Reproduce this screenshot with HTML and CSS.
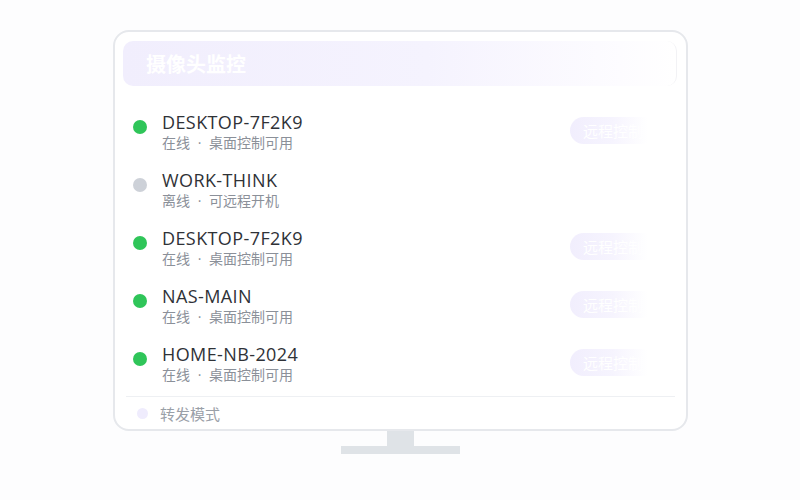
FILE: index.html
```html
<!DOCTYPE html>
<html lang="zh-CN">
<head>
  <meta charset="UTF-8">
  <meta name="viewport" content="width=device-width, initial-scale=1.0">
  <title>摄像头监控</title>
  <link rel="stylesheet" href="styles.css">
</head>
<body>
  <div class="stage">
    <div class="monitor">
      <header class="panel-head">摄像头监控</header>

      <ul class="device-list">
        <li class="device">
          <span class="dot online"></span>
          <div class="device-info">
            <div class="device-name">DESKTOP-7F2K9</div>
            <div class="device-desc">在线 · 桌面控制可用</div>
          </div>
          <button class="remote-btn">远程控制</button>
        </li>
        <li class="device">
          <span class="dot offline"></span>
          <div class="device-info">
            <div class="device-name">WORK-THINK</div>
            <div class="device-desc">离线 · 可远程开机</div>
          </div>
        </li>
        <li class="device">
          <span class="dot online"></span>
          <div class="device-info">
            <div class="device-name">DESKTOP-7F2K9</div>
            <div class="device-desc">在线 · 桌面控制可用</div>
          </div>
          <button class="remote-btn">远程控制</button>
        </li>
        <li class="device">
          <span class="dot online"></span>
          <div class="device-info">
            <div class="device-name">NAS-MAIN</div>
            <div class="device-desc">在线 · 桌面控制可用</div>
          </div>
          <button class="remote-btn">远程控制</button>
        </li>
        <li class="device">
          <span class="dot online"></span>
          <div class="device-info">
            <div class="device-name">HOME-NB-2024</div>
            <div class="device-desc">在线 · 桌面控制可用</div>
          </div>
          <button class="remote-btn">远程控制</button>
        </li>
      </ul>

      <footer class="panel-foot">
        <span class="dot relay"></span>
        <span>转发模式</span>
      </footer>
    </div>

    <div class="stand-neck"></div>
    <div class="stand-base"></div>
  </div>
</body>
</html>
```

FILE: styles.css
```css
body {
  margin: 0;
  background: #fdfdfe;
  font-family: 'Open Sans', 'Noto Sans CJK SC', sans-serif;
  color: #2a2d33;
}
.stage {
  padding-top: 30px;
  display: flex;
  flex-direction: column;
  align-items: center;
}
.monitor {
  box-sizing: border-box;
  width: 575px;
  height: 401px;
  margin-left: 1px;
  padding: 9px 9px 0 8px;
  border: 2px solid #e6e8ec;
  border-radius: 16px;
  background: #fff;
  display: flex;
  flex-direction: column;
}
.panel-head {
  height: 45px;
  padding-left: 23px;
  border-radius: 10px;
  background: linear-gradient(90deg, #f1eefd 0%, #f5f3fe 55%, #fdfcff 90%, #fff 100%);
  border-right: 1px solid #f2f2f5;
  color: #fff;
  font-size: 20px;
  font-weight: bold;
  line-height: 48px;
}
.device-list {
  list-style: none;
  margin: 17px 0 0;
  padding: 0;
}
.device {
  height: 58px;
  display: flex;
  align-items: center;
  padding-left: 10px;
  padding-right: 21px;
}
.dot {
  display: inline-block;
  width: 14px;
  height: 14px;
  border-radius: 50%;
  flex-shrink: 0;
}
.device .dot {
  margin-bottom: 10px;
}
.online {
  background: #2fc559;
}
.offline {
  background: #cdd1d8;
}
.device-info {
  flex: 1;
  margin-left: 15px;
}
.device-name {
  font-size: 18px;
  line-height: 22px;
  letter-spacing: 0.4px;
  color: #2f3237;
}
.device-desc {
  font-size: 14px;
  line-height: 20px;
  word-spacing: 4px;
  color: #8b9099;
}
.remote-btn {
  height: 27px;
  width: 86px;
  padding: 0 0 0 13px;
  border: none;
  border-radius: 14px;
  background: linear-gradient(90deg, #f1eefd 0%, #f6f4fe 50%, #fff 90%);
  color: #fff;
  font-family: 'Noto Sans CJK SC', sans-serif;
  font-size: 15px;
  text-align: left;
  margin-bottom: 3px;
}
.panel-foot {
  margin: 3px 2px 0 3px;
  border-top: 1px solid #eef0f3;
  flex: 1;
  display: flex;
  align-items: center;
  padding-left: 11px;
  font-size: 15px;
  color: #9aa0a8;
}
.relay {
  width: 11px;
  height: 11px;
  background: #efecfd;
  margin-right: 12px;
}
.stand-neck {
  width: 27px;
  height: 15px;
  background: #dfe3e7;
}
.stand-base {
  width: 119px;
  height: 8px;
  background: #dfe3e7;
}
```
